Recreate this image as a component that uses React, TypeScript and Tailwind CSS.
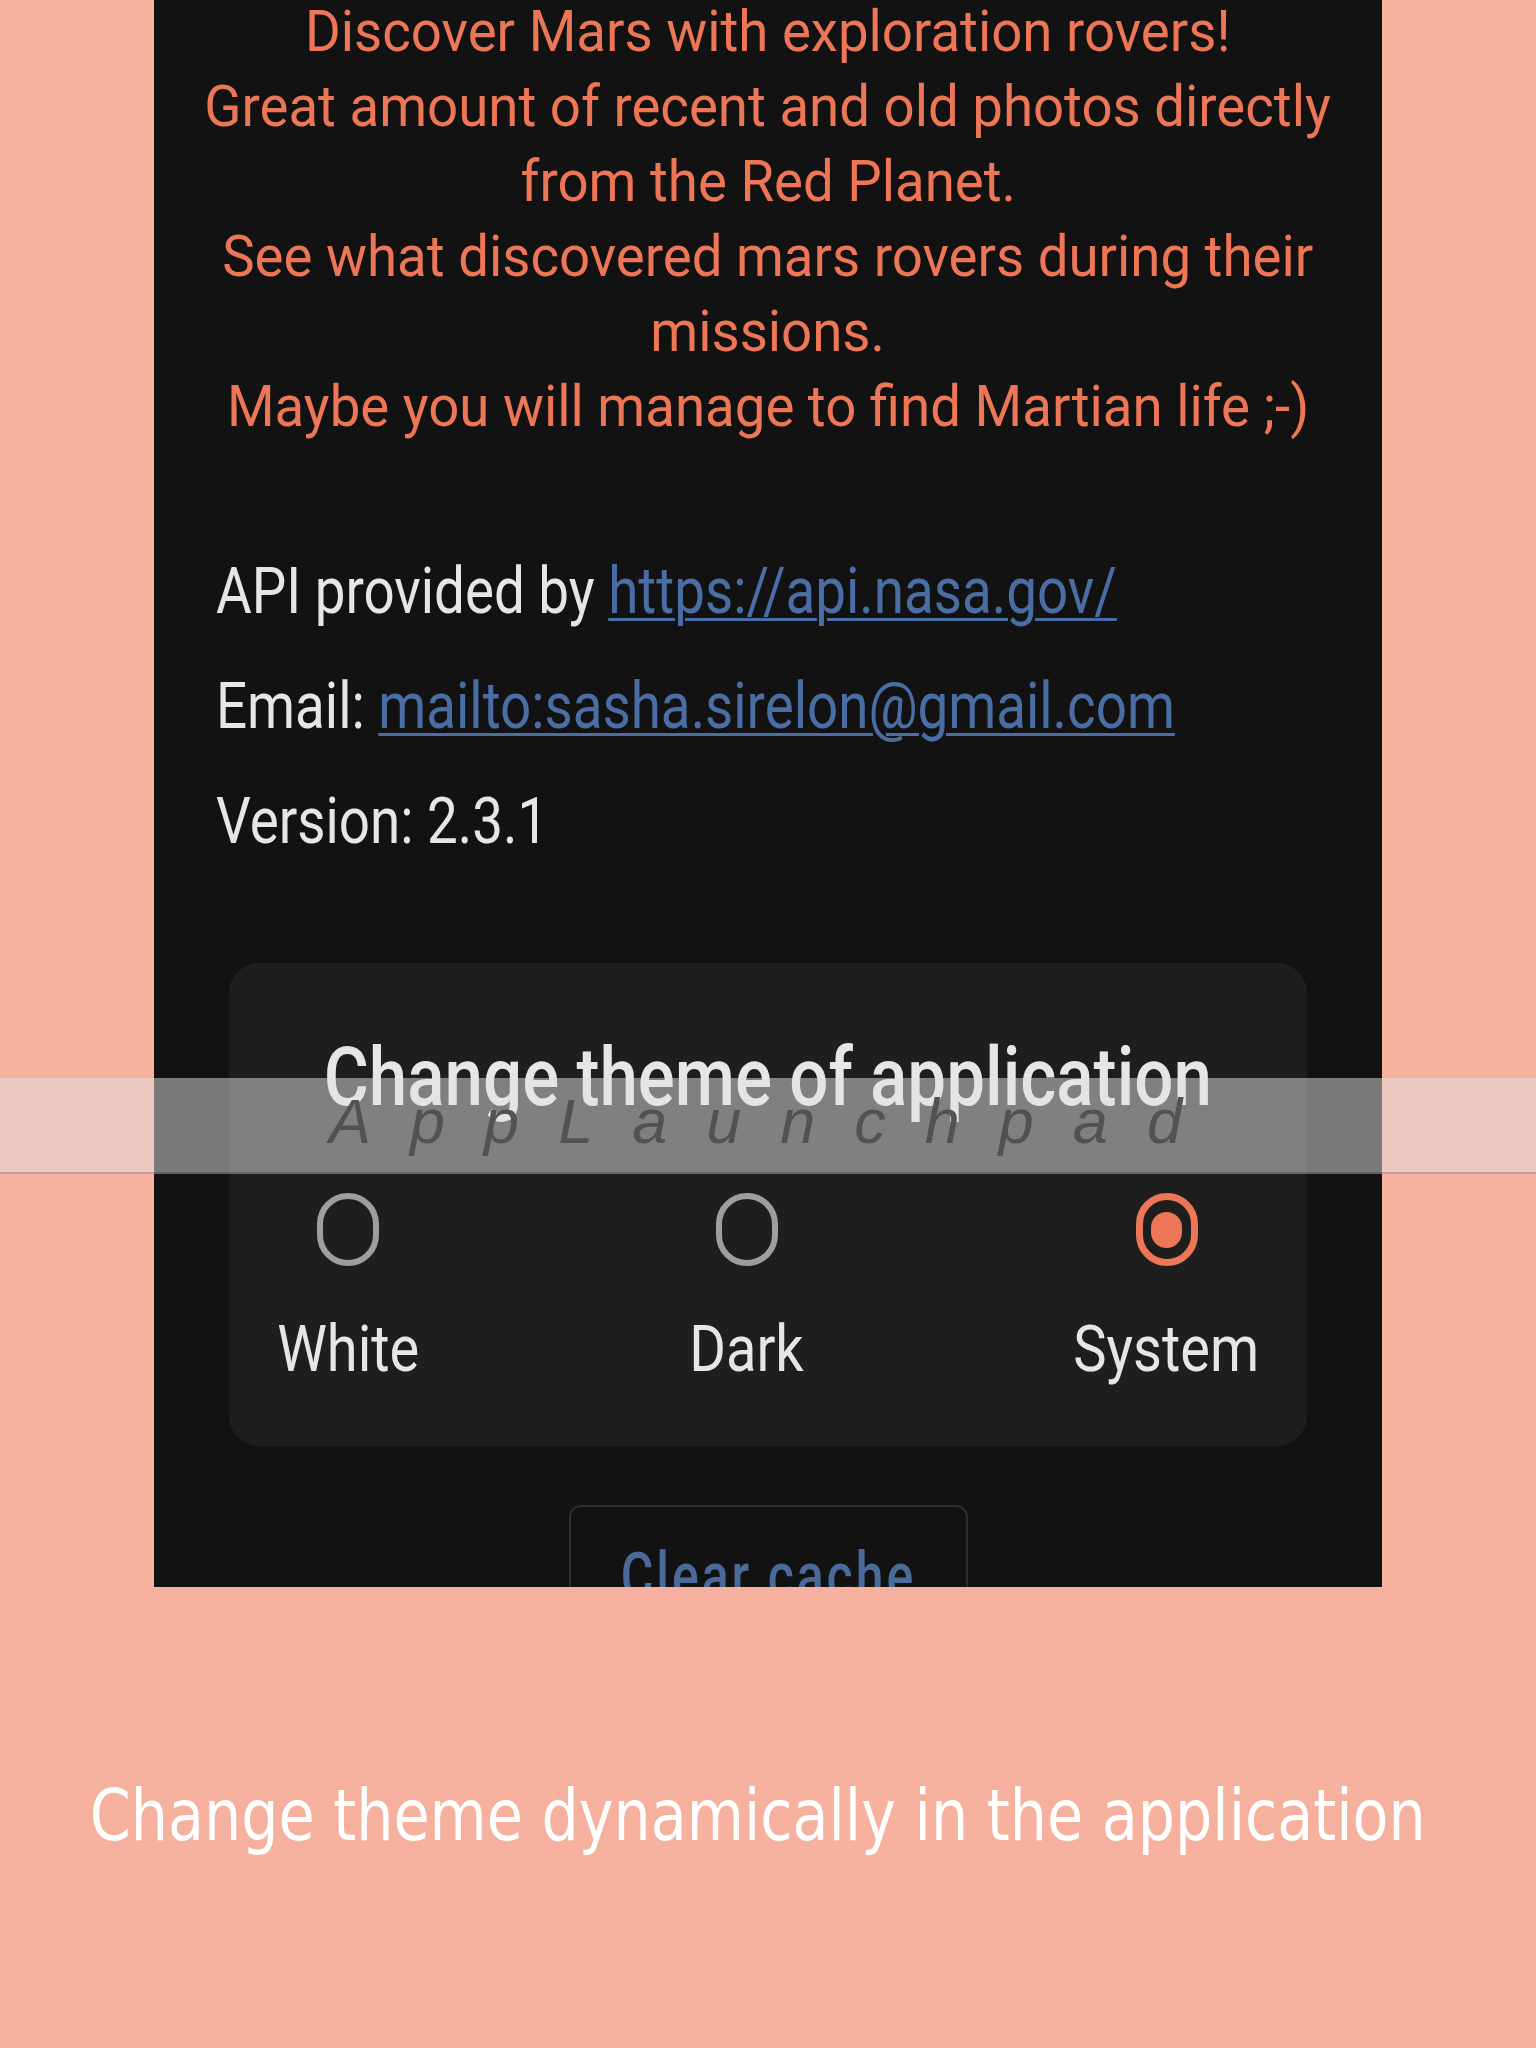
import React from "react";

const aboutLines = [
  "Discover Mars with exploration rovers!",
  "Great amount of recent and old photos directly",
  "from the Red Planet.",
  "See what discovered mars rovers during their",
  "missions.",
  "Maybe you will manage to find Martian life ;-)",
];

const themes = [
  { label: "White", width: "w-[138px]", checked: false },
  { label: "Dark", width: "w-[111px]", checked: false },
  { label: "System", width: "w-[181px]", checked: true },
];

function Radio({ checked }: { checked: boolean }) {
  return (
    <div
      className={`flex h-[73px] w-[62px] items-center justify-center rounded-full ${
        checked ? "border-[7px] border-[#ec7655]" : "border-[6px] border-[#9e9e9e]"
      }`}
    >
      {checked && <div className="h-[36px] w-[31px] rounded-full bg-[#ec7655]" />}
    </div>
  );
}

export default function App() {
  return (
    <div className="relative h-[2048px] w-full overflow-hidden bg-[#f5b09e]">
      {/* Phone screenshot */}
      <div className="mx-auto flex h-[1587px] w-[1228px] flex-col overflow-hidden bg-[#121212] font-[Roboto,sans-serif]">
        {/* About text */}
        <div className="mt-[-6px] shrink-0 text-[58px] leading-[75px] text-[#ec7655]">
          {aboutLines.map((line) => (
            <div key={line} className="flex justify-center">
              <span className="inline-block shrink-0 scale-x-[0.941] whitespace-nowrap">{line}</span>
            </div>
          ))}
        </div>

        {/* Info */}
        <div className="mt-[90px] shrink-0 pl-[62px] text-[64px] leading-[115px] text-[#e6e6e6]">
          <div>
            <span className="inline-block origin-left scale-x-[0.855] whitespace-nowrap">
              API provided by{" "}
              <span className="text-[#4a6ea3] underline decoration-[3px] underline-offset-[5px]">
                https://api.nasa.gov/
              </span>
            </span>
          </div>
          <div>
            <span className="inline-block origin-left scale-x-[0.855] whitespace-nowrap">
              Email:{" "}
              <span className="text-[#4a6ea3] underline decoration-[3px] underline-offset-[5px]">
                mailto:sasha.sirelon@gmail.com
              </span>
            </span>
          </div>
          <div>
            <span className="inline-block origin-left scale-x-[0.855] whitespace-nowrap">
              Version: 2.3.1
            </span>
          </div>
        </div>

        {/* Theme card */}
        <div className="mx-[75px] mt-[84px] flex h-[483px] shrink-0 flex-col rounded-[30px] bg-[#1e1e1e] px-[50px] pt-[66px]">
          <div className="flex justify-center text-[82px] font-medium leading-[96px] text-[#e6e6e6]">
            <span className="inline-block shrink-0 scale-x-[0.843] whitespace-nowrap">
              Change theme of application
            </span>
          </div>
          <div className="mt-[68px] flex justify-between">
            {themes.map((t) => (
              <div key={t.label} className={`flex flex-col items-center ${t.width}`}>
                <Radio checked={t.checked} />
                <div className="mt-[46px] flex justify-center text-[64px] leading-[75px] text-[#e6e6e6]">
                  <span className="inline-block shrink-0 scale-x-[0.875] whitespace-nowrap">{t.label}</span>
                </div>
              </div>
            ))}
          </div>
        </div>

        {/* Clear cache button */}
        <div className="mt-[59px] flex shrink-0 justify-center">
          <div className="flex h-[130px] w-[399px] justify-center rounded-[12px] border-2 border-[#2f2f2f] pt-[38px] text-[64px] font-medium leading-[64px] tracking-[0.06em] text-[#4a6a9a]">
            <span className="inline-block shrink-0 scale-x-[0.78] whitespace-nowrap">Clear cache</span>
          </div>
        </div>
      </div>

      {/* Caption */}
      <div className="mt-[193px] flex justify-center pr-[21px] font-['DejaVu_Sans',sans-serif] text-[71px] leading-[71px] text-white">
        <span className="inline-block shrink-0 scale-x-[0.827] whitespace-nowrap">
          Change theme dynamically in the application
        </span>
      </div>

      {/* Watermark band */}
      <div className="absolute left-0 right-0 top-[1078px] h-[96px] border-b-2 border-b-black/20 bg-[#e2e2e2]/50">
        <div className="flex justify-center pl-[14px] pt-[12px] font-['Liberation_Sans',sans-serif] text-[63px] italic leading-[63px] tracking-[39px] text-[#525252]">
          <span className="shrink-0 whitespace-nowrap">AppLaunchpad</span>
        </div>
      </div>
    </div>
  );
}
